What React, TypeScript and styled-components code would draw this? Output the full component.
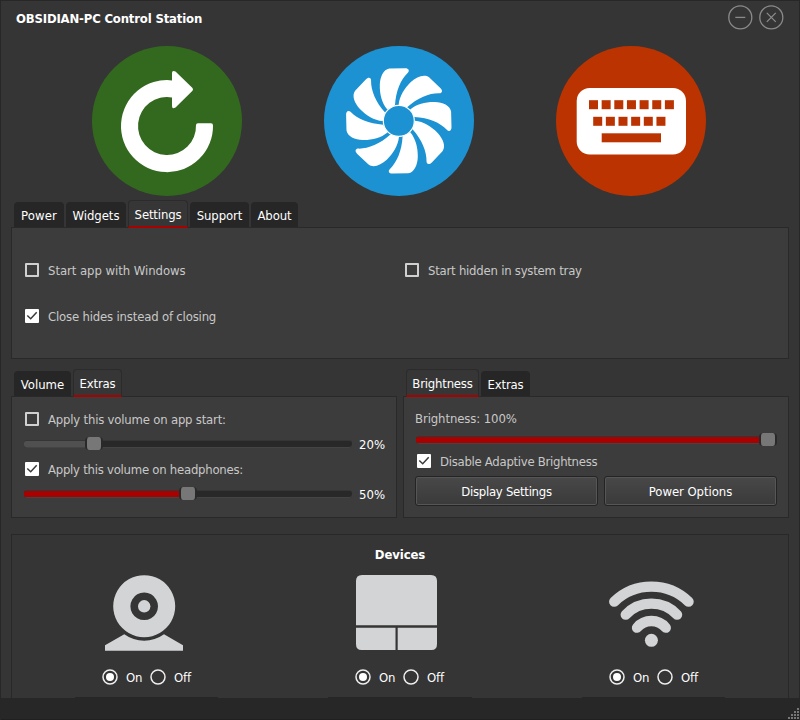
import React from "react";
import styled, { createGlobalStyle, css } from "styled-components";

const GlobalStyle = createGlobalStyle`
  * { box-sizing: border-box; }
  body {
    margin: 0;
    background: #353535;
    font-family: "DejaVu Sans Condensed", "DejaVu Sans", sans-serif;
    font-stretch: condensed;
    font-size: 13px;
    line-height: 16px;
    color: #fff;
  }
`;

const Window = styled.div`
  display: flex;
  flex-direction: column;
  width: 800px;
  height: 720px;
  overflow: hidden;
  background: #353535;
  border: 1px solid #272727;
  border-bottom: 0;
`;

const TitleBar = styled.header`
  display: flex;
  flex: none;
  justify-content: space-between;
  height: 45px;
  padding: 3px 15px 0 15px;
`;

const Title = styled.h1`
  margin: 7px 0 0;
  font-size: 13px;
  line-height: 16px;
  font-weight: 700;
  letter-spacing: -0.18px;
`;

const WindowControls = styled.div`
  display: flex;
  gap: 5px;
`;

const ControlButton = styled.button`
  width: 26px;
  height: 26px;
  padding: 0;
  border: 0;
  background: none;
  svg { display: block; }
`;

const Modes = styled.nav`
  display: flex;
  flex: none;
  gap: 82px;
  height: 150px;
  padding-left: 91px;
  svg { display: block; flex: none; }
`;

const Section = styled.section<{ $width: number }>`
  display: flex;
  flex-direction: column;
  width: ${(p) => p.$width}px;
`;

const TabBar = styled.div`
  display: flex;
  align-items: flex-end;
  gap: 2px;
  height: 28px;
  margin: 0 0 -1px 3px;
`;

const Tab = styled.div<{ $w: number; $active?: boolean; $ls?: number }>`
  width: ${(p) => p.$w}px;
  height: 25px;
  margin-bottom: 1px;
  padding-top: 6px;
  border-radius: 4px 4px 0 0;
  background: #262626;
  text-align: center;
  white-space: nowrap;
  letter-spacing: ${(p) => p.$ls ?? 0}px;
  ${(p) =>
    p.$active &&
    css`
      z-index: 1;
      height: 28px;
      margin-bottom: 0;
      border: 1px solid #2b2b2b;
      border-bottom: 2px solid #a90000;
      background: #363636;
    `}
`;

const Panel = styled.div<{ $h: number }>`
  height: ${(p) => p.$h}px;
  border: 1px solid #292929;
  background: #3c3c3c;
`;

const SettingsGrid = styled(Panel)`
  display: grid;
  grid-template-columns: 380px 1fr;
  grid-auto-rows: 46px;
  padding: 19px 0 0 13px;
`;

const Columns = styled.div<{ $top: number }>`
  display: flex;
  flex: none;
  gap: 6px;
  margin: ${(p) => p.$top}px 0 0 10px;
`;

const VolumePanel = styled(Panel)`
  padding: 11px 0 0 12px;
  > :last-child { margin-top: 2px; }
`;

const BrightnessPanel = styled(Panel)`
  padding: 14px 11px 0 11px;
`;

const CheckRow = styled.label<{ $h: number; $ls: number; $indent?: number }>`
  display: flex;
  align-items: center;
  gap: 9px;
  height: ${(p) => p.$h}px;
  padding-left: ${(p) => p.$indent ?? 0}px;
  color: #c8c8c8;
  white-space: nowrap;
  letter-spacing: ${(p) => p.$ls}px;
`;

const LabelText = styled.span`
  padding-top: 2px;
`;

const Box = styled.span<{ $on?: boolean }>`
  flex: none;
  width: 14px;
  height: 14px;
  border: 2px solid #d0d0d0;
  border-radius: 1px;
  ${(p) => p.$on && css`border: 0; background: #fff;`}
  svg { display: block; }
`;

const VolumeRow = styled.div`
  display: flex;
  align-items: center;
  gap: 7px;
  height: 30px;
  padding-bottom: 1px;
`;

const Percent = styled.span`
  padding-top: 1px;
`;

const Groove = styled.div<{ $w: number }>`
  display: flex;
  align-items: center;
  width: ${(p) => p.$w}px;
  height: 7px;
  border-radius: 3px;
  background: #282828;
  box-shadow: inset 0 -1px 0 #444, 0 -1px 0 #353535;
`;

const Fill = styled.div<{ $w: number; $color: string }>`
  flex: none;
  width: ${(p) => p.$w}px;
  height: 6px;
  margin-bottom: 1px;
  border-radius: 2px 0 0 2px;
  background: ${(p) => p.$color};
`;

const Handle = styled.div`
  flex: none;
  width: 18px;
  height: 13px;
  margin: 0 0 2px -1px;
  border: solid #292929;
  border-width: 0 2px;
  border-radius: 4px;
  background: #777;
`;

const Caption = styled.div`
  height: 16px;
  color: #c8c8c8;
  letter-spacing: -0.1px;
`;

const BrightnessTrack = styled.div`
  display: flex;
  align-items: center;
  height: 24px;
  padding: 3px 0 0 1px;
`;

const Buttons = styled.div`
  display: flex;
  gap: 6px;
  margin-top: 5px;
`;

const PushButton = styled.button<{ $w: number; $ls: number }>`
  width: ${(p) => p.$w}px;
  height: 30px;
  padding: 1px 0 0;
  border: 1px solid #242424;
  border-radius: 3px;
  background: linear-gradient(#484848, #3a3a3a);
  box-shadow: inset 0 0 0 1px #565656;
  color: #fff;
  font: inherit;
  letter-spacing: ${(p) => p.$ls}px;
`;

const Devices = styled.section`
  display: flex;
  flex-direction: column;
  flex: none;
  width: 778px;
  height: 164px;
  margin: 16px 0 0 10px;
  border: 1px solid #282828;
  border-bottom: 0;
`;

const DevicesTitle = styled.h2`
  margin: 12px 0 0;
  font-size: 13px;
  line-height: 16px;
  text-align: center;
  letter-spacing: -0.1px;
`;

const DeviceList = styled.div`
  display: grid;
  grid-template-columns: 143px 144px 143px;
  column-gap: 110px;
  padding-left: 63px;
`;

const Device = styled.div`
  display: flex;
  flex-direction: column;
  height: 135px;
  border-bottom: 1px solid #262626;
  > svg { display: block; flex: none; }
`;

const Radios = styled.div`
  display: flex;
  align-items: center;
  height: 20px;
  margin: 16px 0 0 27px;
`;

const RadioLabel = styled.label<{ $w: number }>`
  display: flex;
  align-items: center;
  gap: 8px;
  width: ${(p) => p.$w}px;
  letter-spacing: -0.15px;
  svg { flex: none; }
`;

const StatusBar = styled.footer`
  display: flex;
  flex: none;
  justify-content: flex-end;
  align-items: flex-end;
  height: 22px;
  border-bottom: 1px solid #202020;
  background: #272727;
`;

type CheckProps = { label: string; height: number; spacing: number; indent?: number; on?: boolean };

const CheckBox = ({ label, height, spacing, indent, on }: CheckProps) => (
  <CheckRow $h={height} $ls={spacing} $indent={indent}>
    <Box $on={on}>
      {on && (
        <svg width="14" height="14" viewBox="0 0 14 14">
          <path d="M2.300 6.500 5.700 9.700 11.700 3.300" fill="none" stroke="#3a3a3a" strokeWidth="1.500" />
        </svg>
      )}
    </Box>
    <LabelText>{label}</LabelText>
  </CheckRow>
);

const Slider = ({ width, value, color }: { width: number; value: number; color: string }) => (
  <Groove $w={width}>
    <Fill $w={value} $color={color} />
    <Handle />
  </Groove>
);

const Radio = ({ on }: { on?: boolean }) => (
  <svg width="16" height="16" viewBox="0 0 16 16">
    <circle cx="8" cy="8" r="7" fill="none" stroke="#eee" strokeWidth="1.500" />
    {on && <circle cx="8" cy="8" r="4" fill="#fff" />}
  </svg>
);

const OnOff = () => (
  <Radios>
    <RadioLabel $w={48}><Radio on /><LabelText>On</LabelText></RadioLabel>
    <RadioLabel $w={50}><Radio /><LabelText>Off</LabelText></RadioLabel>
  </Radios>
);

const PowerIcon = () => (
  <svg width="150" height="150" viewBox="0 0 150 150">
    <circle cx="75" cy="75" r="75" fill="#33691e" />
    <path d="M80 34.400V27q0-3 3.500-1.500L100.500 42q1 1.400 0 2.800L83.500 61.500Q80 63.500 80 60V51.400A29 29 0 1 0 104 79Q104 77.300 106 77.300H119Q121 77.300 121 79.500A46 46 0 1 1 80 34.400Z" fill="#fff" />
  </svg>
);

const BLADE =
  "M-11.500-11.300C-17-18-19.200-27-19-36C-18.700-44-15.500-51.300-9.500-52.300L6-52.700C10.200-52.800 11-50 8.800-48C2-41.500-3-30-3.800-15.600Z";

const FanIcon = () => (
  <svg width="150" height="150" viewBox="0 0 150 150">
    <circle cx="75" cy="75" r="75" fill="#1c92d2" />
    <g transform="translate(74.800 74.900)" fill="#fff">
      {[0, 45, 90, 135, 180, 225, 270, 315].map((a) => (
        <path key={a} d={BLADE} transform={`rotate(${a})`} />
      ))}
      <circle r="15.500" fill="#1c92d2" stroke="#fff" strokeWidth="1.200" />
    </g>
  </svg>
);

const KeyboardIcon = () => (
  <svg width="150" height="150" viewBox="0 0 150 150">
    <circle cx="75" cy="75" r="75" fill="#bb3300" />
    <rect x="20.700" y="42" width="109.300" height="66.500" rx="13" fill="#fff" />
    <g fill="#bb3300">
      {[0, 1, 2, 3, 4, 5, 6].map((i) => (
        <rect key={i} x={33 + i * 12.65} y="54.200" width="9" height="9" />
      ))}
      {[0, 1, 2, 3, 4, 5].map((i) => (
        <rect key={i} x={37.2 + i * 12.65} y="70.800" width="9" height="9" />
      ))}
      <rect x="45.700" y="87.300" width="59.300" height="9" />
    </g>
  </svg>
);

const WebcamIcon = () => (
  <svg width="143" height="88" viewBox="0 0 143 88">
    <g fill="#d3d4d6">
      <path d="M30 87.700V82.300L49.300 71.300A34 34 0 0 0 89 71.300L108 82.300V87.700Z" />
      <path fillRule="evenodd" d="M69.200 12.200a31 31 0 1 0 .01 0ZM69.200 29.500a13.800 13.800 0 1 1-.01 0Z" />
      <circle cx="69.200" cy="43.300" r="6.200" />
    </g>
  </svg>
);

const TouchpadIcon = () => (
  <svg width="143" height="88" viewBox="0 0 143 88">
    <g fill="#d3d4d6">
      <path d="M28 62.300V18Q28 12 34 12H103Q109 12 109 18V62.300Z" />
      <path d="M28 64.700H67.500V87H33.500Q28 87 28 81Z" />
      <path d="M69.700 64.700H109V81Q109 87 103.500 87H69.700Z" />
    </g>
  </svg>
);

const WifiIcon = () => (
  <svg width="143" height="88" viewBox="0 0 143 88">
    <g fill="none" stroke="#d3d4d6" strokeWidth="10.300" strokeLinecap="round">
      <path d="M32.200 38.700A53.600 53.600 0 0 1 106.600 38.700" />
      <path d="M43.700 51.700A35.500 35.500 0 0 1 95.100 51.700" />
      <path d="M55 64.700A18.800 18.800 0 0 1 83.800 64.700" />
    </g>
    <circle cx="69.400" cy="77.300" r="6.500" fill="#d3d4d6" />
  </svg>
);

const SizeGrip = () => (
  <svg width="13" height="13" viewBox="0 0 13 13" fill="#777">
    {[0, 1, 2, 3].flatMap((r) =>
      Array.from({ length: r + 1 }, (_, i) => (
        <rect key={`${r}-${i}`} x={11 - i * 3} y={2 + r * 3} width="2" height="2" />
      )),
    )}
  </svg>
);

export default function App() {
  return (
    <>
      <GlobalStyle />
      <Window>
        <TitleBar>
          <Title>OBSIDIAN-PC Control Station</Title>
          <WindowControls>
            <ControlButton aria-label="Minimize">
              <svg width="26" height="26" fill="none" stroke="#8a8a8a" strokeWidth="1.300">
                <circle cx="13.300" cy="13.400" r="11.500" />
                <path d="M8.300 13.400H18.300" />
              </svg>
            </ControlButton>
            <ControlButton aria-label="Close">
              <svg width="26" height="26" fill="none" stroke="#8a8a8a" strokeWidth="1.300">
                <circle cx="13.300" cy="13.400" r="11.500" />
                <path d="M8.800 8.900 17.800 17.900M17.800 8.900 8.800 17.900" />
              </svg>
            </ControlButton>
          </WindowControls>
        </TitleBar>
        <Modes>
          <PowerIcon />
          <FanIcon />
          <KeyboardIcon />
        </Modes>
        <Columns $top={4}>
          <Section $width={778}>
            <TabBar>
              <Tab $w={50} $ls={0.1}>Power</Tab>
              <Tab $w={60} $ls={-0.05}>Widgets</Tab>
              <Tab $w={60} $ls={-0.15} $active>Settings</Tab>
              <Tab $w={59} $ls={-0.1}>Support</Tab>
              <Tab $w={47} $ls={-0.1}>About</Tab>
            </TabBar>
            <SettingsGrid $h={132}>
              <CheckBox height={46} spacing={-0.05} label="Start app with Windows" />
              <CheckBox height={46} spacing={-0.23} label="Start hidden in system tray" />
              <CheckBox height={46} spacing={-0.18} label="Close hides instead of closing" on />
            </SettingsGrid>
          </Section>
        </Columns>
        <Columns $top={10}>
          <Section $width={386}>
            <TabBar>
              <Tab $w={57}>Volume</Tab>
              <Tab $w={49} $ls={-0.15} $active>Extras</Tab>
            </TabBar>
            <VolumePanel $h={122}>
              <CheckBox height={22} indent={1} spacing={-0.2} label="Apply this volume on app start:" />
              <VolumeRow><Slider width={328} value={62} color="#505050" /><Percent>20%</Percent></VolumeRow>
              <CheckBox height={18} indent={1} spacing={-0.25} label="Apply this volume on headphones:" on />
              <VolumeRow><Slider width={328} value={156} color="#a90000" /><Percent>50%</Percent></VolumeRow>
            </VolumePanel>
          </Section>
          <Section $width={386}>
            <TabBar>
              <Tab $w={73} $ls={-0.2} $active>Brightness</Tab>
              <Tab $w={49} $ls={-0.15}>Extras</Tab>
            </TabBar>
            <BrightnessPanel $h={122}>
              <Caption>Brightness: 100%</Caption>
              <BrightnessTrack><Slider width={361} value={344} color="#a90000" /></BrightnessTrack>
              <CheckBox height={20} indent={2} spacing={-0.28} label="Disable Adaptive Brightness" on />
              <Buttons>
                <PushButton $w={183} $ls={-0.27}>Display Settings</PushButton>
                <PushButton $w={173} $ls={-0.05}>Power Options</PushButton>
              </Buttons>
            </BrightnessPanel>
          </Section>
        </Columns>
        <Devices>
          <DevicesTitle>Devices</DevicesTitle>
          <DeviceList>
            <Device><WebcamIcon /><OnOff /></Device>
            <Device><TouchpadIcon /><OnOff /></Device>
            <Device><WifiIcon /><OnOff /></Device>
          </DeviceList>
        </Devices>
        <StatusBar><SizeGrip /></StatusBar>
      </Window>
    </>
  );
}
